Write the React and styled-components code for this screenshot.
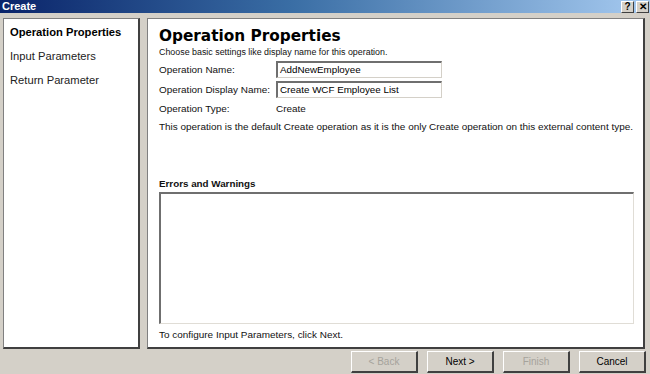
import React from 'react';
import styled, { createGlobalStyle } from 'styled-components';

const GlobalStyle = createGlobalStyle`
    html, body {
        margin: 0;
        padding: 0;
        background: #d4d0c8;
        font-family: Tahoma, "Liberation Sans", Arial, sans-serif;
    }
`;

const StyledWindow = styled.div`
    width: 650px;
    height: 374px;
    display: flex;
    flex-direction: column;
    background: #d4d0c8;
    overflow: hidden;
`;

const StyledTitleBar = styled.div`
    height: 13px;
    display: flex;
    align-items: center;
    justify-content: space-between;
    background: linear-gradient(to right, #0a246a 0%, #3a6ea5 45%, #a6caf0 100%);
    padding-left: 2px;
    padding-right: 1px;
`;

const StyledTitle = styled.span`
    color: #fff;
    font-weight: bold;
    font-size: 11px;
    line-height: 13px;
`;

const StyledCaptionButtons = styled.div`
    display: flex;
    gap: 2px;
`;

const StyledCaptionButton = styled.div`
    width: 13px;
    height: 12px;
    display: flex;
    align-items: center;
    justify-content: center;
    background: #d4d0c8;
    border-top: 1px solid #fff;
    border-left: 1px solid #fff;
    border-right: 1px solid #404040;
    border-bottom: 1px solid #404040;
    box-sizing: border-box;
    font-size: 10px;
    font-weight: bold;
    color: #000;
`;

const StyledBody = styled.div`
    flex: 1;
    display: flex;
    gap: 7px;
    padding: 5px 5px 2px 3px;
    min-height: 0;
`;

const StyledPanel = styled.div`
    background: #fff;
    border: 1px solid #808080;
    border-right: 2px solid #404040;
    border-bottom: 2px solid #404040;
    box-sizing: border-box;
    display: flex;
    flex-direction: column;
`;

const StyledNav = styled(StyledPanel)`
    width: 137px;
    padding: 6px 0 0 6px;
    gap: 10px;
`;

const StyledNavItem = styled.div`
    font-size: 11.2px;
    font-weight: ${props => props.$active ? 'bold' : 'normal'};
    color: ${props => props.$active ? '#000' : '#222'};
    line-height: 14px;
`;

const StyledContent = styled(StyledPanel)`
    flex: 1;
    padding: 8px 9px 6px 11px;
    font-size: 9.95px;
    color: #111;
`;

const StyledHeading = styled.h1`
    margin: 0;
    font-family: "DejaVu Sans", Tahoma, sans-serif;
    font-size: 15.3px;
    font-weight: bold;
    line-height: 19px;
    color: #000;
`;

const StyledText = styled.div`
    line-height: 12px;
    font-size: ${props => props.$small ? '8.9px' : 'inherit'};
    margin-top: ${props => props.$top || 0}px;
`;

const StyledForm = styled.div`
    display: grid;
    grid-template-columns: 117px 166px;
    row-gap: 3px;
    align-items: center;
    margin-top: 3px;
`;

const StyledLabel = styled.div`
    line-height: 16px;
`;

const StyledInput = styled.div`
    height: 17px;
    box-sizing: border-box;
    border-top: 2px solid #6f6f6f;
    border-left: 2px solid #6f6f6f;
    border-right: 1px solid #d4d0c8;
    border-bottom: 1px solid #d4d0c8;
    padding-left: 2px;
    line-height: 14px;
    font-size: 9.8px;
    color: #000;
`;

const StyledSectionTitle = styled.div`
    font-weight: bold;
    font-size: 9.8px;
    margin-top: 45px;
    line-height: 12px;
`;

const StyledMessages = styled.div`
    flex: 1;
    margin-top: 2px;
    border-top: 2px solid #6f6f6f;
    border-left: 2px solid #6f6f6f;
    border-right: 1px solid #e0ddd6;
    border-bottom: 1px solid #e0ddd6;
`;

const StyledFooter = styled.div`
    height: 23px;
    display: flex;
    justify-content: flex-end;
    align-items: flex-start;
    gap: 9px;
    padding-right: 4px;
`;

const StyledButton = styled.button`
    width: 67px;
    height: 22px;
    padding: 0;
    background: #d4d0c8;
    border-top: 1px solid #fff;
    border-left: 1px solid #fff;
    border-right: 2px solid #404040;
    border-bottom: 2px solid #404040;
    font-family: Tahoma, "Liberation Sans", Arial, sans-serif;
    font-size: 10px;
    color: ${props => props.disabled ? '#a6a39c' : '#000'};
`;

export default function App() {
    return (
        <>
            <GlobalStyle />
            <StyledWindow>
                <StyledTitleBar>
                    <StyledTitle>Create</StyledTitle>
                    <StyledCaptionButtons>
                        <StyledCaptionButton>?</StyledCaptionButton>
                        <StyledCaptionButton>✕</StyledCaptionButton>
                    </StyledCaptionButtons>
                </StyledTitleBar>
                <StyledBody>
                    <StyledNav>
                        <StyledNavItem $active>Operation Properties</StyledNavItem>
                        <StyledNavItem>Input Parameters</StyledNavItem>
                        <StyledNavItem>Return Parameter</StyledNavItem>
                    </StyledNav>
                    <StyledContent>
                        <StyledHeading>Operation Properties</StyledHeading>
                        <StyledText $small>Choose basic settings like display name for this operation.</StyledText>
                        <StyledForm>
                            <StyledLabel>Operation Name:</StyledLabel>
                            <StyledInput>AddNewEmployee</StyledInput>
                            <StyledLabel>Operation Display Name:</StyledLabel>
                            <StyledInput>Create WCF Employee List</StyledInput>
                            <StyledLabel>Operation Type:</StyledLabel>
                            <StyledLabel>Create</StyledLabel>
                        </StyledForm>
                        <StyledText $top={4}>This operation is the default Create operation as it is the only Create operation on this external content type.</StyledText>
                        <StyledSectionTitle>Errors and Warnings</StyledSectionTitle>
                        <StyledMessages />
                        <StyledText $top={5}>To configure Input Parameters, click Next.</StyledText>
                    </StyledContent>
                </StyledBody>
                <StyledFooter>
                    <StyledButton disabled>&lt; Back</StyledButton>
                    <StyledButton>Next &gt;</StyledButton>
                    <StyledButton disabled>Finish</StyledButton>
                    <StyledButton>Cancel</StyledButton>
                </StyledFooter>
            </StyledWindow>
        </>
    );
}
